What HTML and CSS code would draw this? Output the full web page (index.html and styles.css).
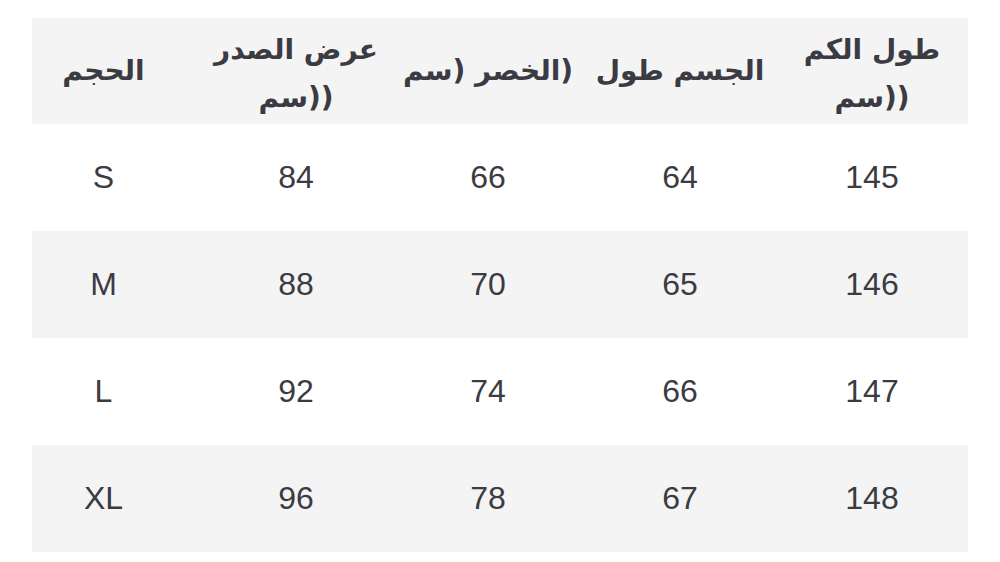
FILE: index.html
```html
<!DOCTYPE html>
<html lang="ar">
<head>
<meta charset="utf-8">
<link rel="stylesheet" href="styles.css">
</head>
<body>
<div class="table">
  <div class="row head">
    <div class="cell first" dir="rtl">الحجم</div>
    <div class="cell two" dir="rtl">عرض الصدر<br>((سم</div>
    <div class="cell" dir="rtl">(الخصر (سم</div>
    <div class="cell" dir="rtl">الجسم طول</div>
    <div class="cell two" dir="rtl">طول الكم<br>((سم</div>
  </div>
  <div class="row">
    <div class="cell first">S</div><div class="cell">84</div><div class="cell">66</div><div class="cell">64</div><div class="cell">145</div>
  </div>
  <div class="row shade">
    <div class="cell first">M</div><div class="cell">88</div><div class="cell">70</div><div class="cell">65</div><div class="cell">146</div>
  </div>
  <div class="row">
    <div class="cell first">L</div><div class="cell">92</div><div class="cell">74</div><div class="cell">66</div><div class="cell">147</div>
  </div>
  <div class="row shade">
    <div class="cell first">XL</div><div class="cell">96</div><div class="cell">78</div><div class="cell">67</div><div class="cell">148</div>
  </div>
</div>
</body>
</html>
```
FILE: styles.css
```css
html, body {
  margin: 0;
  padding: 0;
  background: #ffffff;
}
body {
  font-family: "Liberation Sans", Arial, sans-serif;
  color: #3b3b42;
}
.table {
  margin: 18px 0 0 32px;
  width: 936px;
}
.row {
  display: grid;
  grid-template-columns: 168px repeat(4, 192px);
  height: 107px;
  align-items: center;
  font-size: 32px;
}
.row.head {
  height: 106px;
  background: #f4f4f5;
  font-family: "DejaVu Sans", sans-serif;
  font-weight: bold;
  font-size: 28px;
  line-height: 48px;
}
.row.shade {
  background: #f4f4f5;
}
.cell {
  text-align: center;
}
.cell.two {
  padding-top: 6px;
}
.cell.first {
  padding-right: 25px;
}
```
